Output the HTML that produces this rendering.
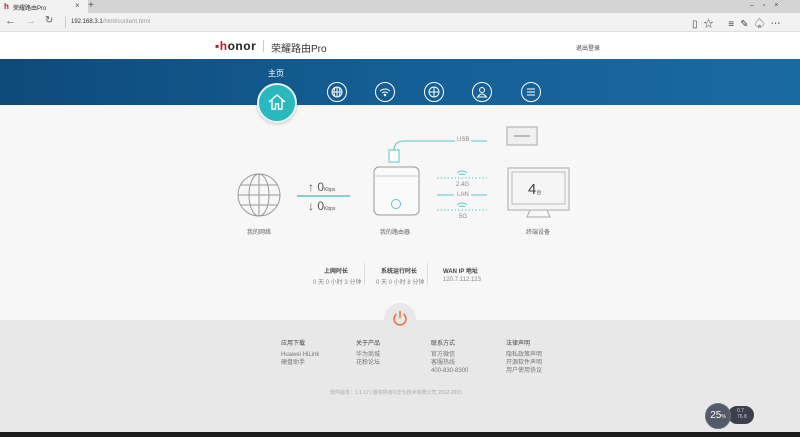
<!DOCTYPE html>
<html><head><meta charset="utf-8"><style>
*{margin:0;padding:0;box-sizing:border-box}
body{width:800px;height:437px;overflow:hidden;font-family:"Liberation Sans","Noto Sans CJK SC",sans-serif;background:#f7f7f7;position:relative;color:#555}
.a{position:absolute}
.t{font-size:6px;color:#666;white-space:nowrap}
.ic{position:absolute;width:20px;height:20px;border:1.5px solid #fff;border-radius:50%}
</style></head><body>
<div class="a" style="left:0;top:0;width:800px;height:13px;background:#d4d4d4"></div>
<div class="a" style="left:0;top:0;width:88px;height:13px;background:#f2f2f2"></div>
<div class="a" style="left:4px;top:2px;font-size:8px;color:#c8102e;font-weight:bold">h</div>
<div class="a t" style="left:13px;top:3px;color:#333">荣耀路由Pro</div>
<div class="a" style="left:75px;top:1px;font-size:8px;color:#555">×</div>
<div class="a" style="left:88px;top:0;font-size:10px;color:#555">+</div>
<div class="a" style="left:750px;top:2px;font-size:7px;color:#444;letter-spacing:9px">–▫×</div>
<div class="a" style="left:0;top:13px;width:800px;height:19px;background:#f2f2f2;border-bottom:1px solid #e0e0e0"></div>
<div class="a" style="left:5px;top:15px;font-size:11px;color:#555">←</div>
<div class="a" style="left:25px;top:15px;font-size:11px;color:#bbb">→</div>
<div class="a" style="left:45px;top:15px;font-size:10px;color:#555">↻</div>
<div class="a" style="left:65px;top:16px;width:1px;height:12px;background:#ccc"></div>
<div class="a t" style="left:71px;top:19px;color:#333">192.168.3.1<span style="color:#999">/html/content.html</span></div>
<div class="a" style="left:692px;top:15px;font-size:10px;color:#444;letter-spacing:6px">▯☆ ≡✎♤⋯</div>
<div class="a" style="left:0;top:32px;width:800px;height:27px;background:#fff"></div>
<div class="a" style="left:215px;top:39px;font-size:12px;font-weight:bold;color:#222;letter-spacing:0.5px"><span style="color:#c8102e">▪h</span>onor</div>
<div class="a" style="left:263px;top:40px;width:1px;height:12px;background:#ccc"></div>
<div class="a" style="left:271px;top:40px;font-size:10px;color:#333">荣耀路由Pro</div>
<div class="a t" style="left:576px;top:43px;color:#444">退出登录</div>
<div class="a" style="left:0;top:59px;width:800px;height:46px;background:linear-gradient(90deg,#0e4a7a,#145f95 50%,#1a6aa2)"></div>
<div class="a" style="left:268px;top:68px;font-size:8px;color:#fff">主页</div>
<div class="a" style="left:257px;top:83px;width:40px;height:40px;border-radius:50%;background:#2ab8bf;border:2px solid #e6f5f6;box-shadow:0 1px 3px rgba(0,0,0,.2)"></div>
<svg class="a" style="left:267px;top:92px" width="20" height="20" viewBox="0 0 20 20" fill="none" stroke="#fff" stroke-width="1.4"><path d="M2 10 L10 3 L18 10 M5 8 V17 H8.5 V12 H11.5 V17 H15 V8"/></svg>
<div class="ic" style="left:327px;top:82px"></div>
<div class="ic" style="left:375px;top:82px"></div>
<div class="ic" style="left:424px;top:82px"></div>
<div class="ic" style="left:472px;top:82px"></div>
<div class="ic" style="left:521px;top:82px"></div>
<svg class="a" style="left:327px;top:82px" width="20" height="20" fill="none" stroke="#fff" stroke-width="1"><circle cx="10" cy="10" r="5"/><path d="M5 10H15M10 5V15M8 5.5Q6 10 8 14.5M12 5.5Q14 10 12 14.5"/></svg>
<svg class="a" style="left:375px;top:82px" width="20" height="20" fill="none" stroke="#fff" stroke-width="1"><path d="M5 9Q10 5 15 9M7 11Q10 9 13 11"/><circle cx="10" cy="13" r=".8" fill="#fff"/></svg>
<svg class="a" style="left:424px;top:82px" width="20" height="20" fill="none" stroke="#fff" stroke-width="1"><circle cx="10" cy="10" r="5"/><path d="M5 10H15M10 5V15"/></svg>
<svg class="a" style="left:472px;top:82px" width="20" height="20" fill="none" stroke="#fff" stroke-width="1"><circle cx="10" cy="8" r="2.5"/><path d="M5.5 15Q10 9 14.5 15Z"/></svg>
<svg class="a" style="left:521px;top:82px" width="20" height="20" fill="none" stroke="#fff" stroke-width="1"><path d="M6 7H14M6 10H14M6 13H14"/></svg>
<svg class="a" style="left:0;top:105px" width="800" height="215" fill="none">
<g stroke="#999" stroke-width="1"><circle cx="259" cy="90" r="21"/><ellipse cx="259" cy="90" rx="10" ry="21"/><path d="M259 69V111M238 90H280M241 80H277M241 100H277"/></g>
<path d="M297 91H350" stroke="#5cc6c4" stroke-width="1.5"/>
<path d="M394 55V45Q394 36 404 36H455M471 36H487M437 90H454M471 90H487" stroke="#5cc6c4" stroke-width="1"/>
<path d="M437 73H487M437 105H487" stroke="#5cc6c4" stroke-width="1" stroke-dasharray="1.5 2"/>
<rect x="389" y="45" width="10" height="12" stroke="#5cc6c4" fill="#fff"/>
<rect x="374" y="62" width="45" height="48" rx="5" stroke="#999" fill="#fafafa"/>
<path d="M374 71H419" stroke="#ccc"/>
<circle cx="396" cy="99" r="4.5" stroke="#5cc6c4"/>
<rect x="507" y="22" width="30" height="18" stroke="#aaa" fill="#f0f0f0"/>
<path d="M514 31H530" stroke="#888"/>
<rect x="508" y="63" width="61" height="42" stroke="#aaa" fill="#f5f5f5"/>
<rect x="512" y="67" width="53" height="32" stroke="#bbb"/>
<path d="M530 105L527 112H550L547 105" stroke="#aaa"/>
<g stroke="#5cc6c4" stroke-width="1"><path d="M457 68Q462 64 467 68M459 70Q462 68 465 70M457 100Q462 96 467 100M459 102Q462 100 465 102"/></g>
</svg>
<div class="a t" style="left:457px;top:137px;color:#888">USB</div>
<div class="a" style="left:308px;top:180px;font-size:12px;color:#555">↑ 0<span style="font-size:5px">Kbps</span></div>
<div class="a" style="left:308px;top:199px;font-size:12px;color:#555">↓ 0<span style="font-size:5px">Kbps</span></div>
<div class="a t" style="left:456px;top:182px;color:#888">2.4G</div>
<div class="a t" style="left:457px;top:192px;color:#888">LAN</div>
<div class="a t" style="left:459px;top:214px;color:#888">5G</div>
<div class="a" style="left:528px;top:181px;font-size:15px;color:#444">4<span style="font-size:5px">台</span></div>
<div class="a t" style="left:247px;top:227px">我的网络</div>
<div class="a t" style="left:380px;top:227px">我的路由器</div>
<div class="a t" style="left:526px;top:227px">终端设备</div>
<div class="a t" style="left:324px;top:266px;font-weight:bold;color:#444">上网时长</div>
<div class="a t" style="left:313px;top:277px;color:#888">0 天 0 小时 3 分钟</div>
<div class="a" style="left:364px;top:263px;width:1px;height:22px;background:#ddd"></div>
<div class="a t" style="left:381px;top:266px;font-weight:bold;color:#444">系统运行时长</div>
<div class="a t" style="left:376px;top:277px;color:#888">0 天 0 小时 8 分钟</div>
<div class="a" style="left:427px;top:263px;width:1px;height:22px;background:#ddd"></div>
<div class="a t" style="left:443px;top:266px;font-weight:bold;color:#444">WAN IP 地址</div>
<div class="a t" style="left:443px;top:277px;color:#888">120.7.112.123</div>
<div class="a" style="left:0;top:320px;width:800px;height:112px;background:#e8e8e8"></div>
<div class="a" style="left:384px;top:303px;width:32px;height:32px;border-radius:50%;background:#e8e8e8"></div>
<svg class="a" style="left:390px;top:308px" width="20" height="20" fill="none" stroke="#e8692c" stroke-width="1.4"><path d="M6.5 6A6 6 0 1 0 13.5 6M10 3V10"/></svg>
<div class="a t" style="left:281px;top:338px;color:#444">应用下载</div>
<div class="a t" style="left:281px;top:351px;color:#777;line-height:8px">Huawei HiLink<br>硬盘助手</div>
<div class="a t" style="left:356px;top:338px;color:#444">关于产品</div>
<div class="a t" style="left:356px;top:351px;color:#777;line-height:8px">华为商城<br>花粉论坛</div>
<div class="a t" style="left:431px;top:338px;color:#444">联系方式</div>
<div class="a t" style="left:431px;top:351px;color:#777;line-height:8px">官方微信<br>客服热线<br>400-830-8300</div>
<div class="a t" style="left:506px;top:338px;color:#444">法律声明</div>
<div class="a t" style="left:506px;top:351px;color:#777;line-height:8px">隐私政策声明<br>开源软件声明<br>用户使用协议</div>
<div class="a t" style="left:330px;top:389px;color:#aaa;font-size:5px">软件版本：1.1.17 | 版权所有©华为技术有限公司 2012-2015</div>
<div class="a" style="left:728px;top:406px;width:26px;height:18px;border-radius:9px;background:#3a3f4a"></div>
<div class="a t" style="left:737px;top:408px;color:#ccd;font-size:5px">0.7<br>76.8</div>
<div class="a" style="left:705px;top:403px;width:26px;height:26px;border-radius:50%;background:#535a68;border:1px solid #6a7080;color:#fff;font-size:10px;text-align:center;line-height:24px">25<span style="font-size:5px">%</span></div>
<div class="a" style="left:0;top:432px;width:800px;height:5px;background:#1c1c1c"></div>
</body></html>
